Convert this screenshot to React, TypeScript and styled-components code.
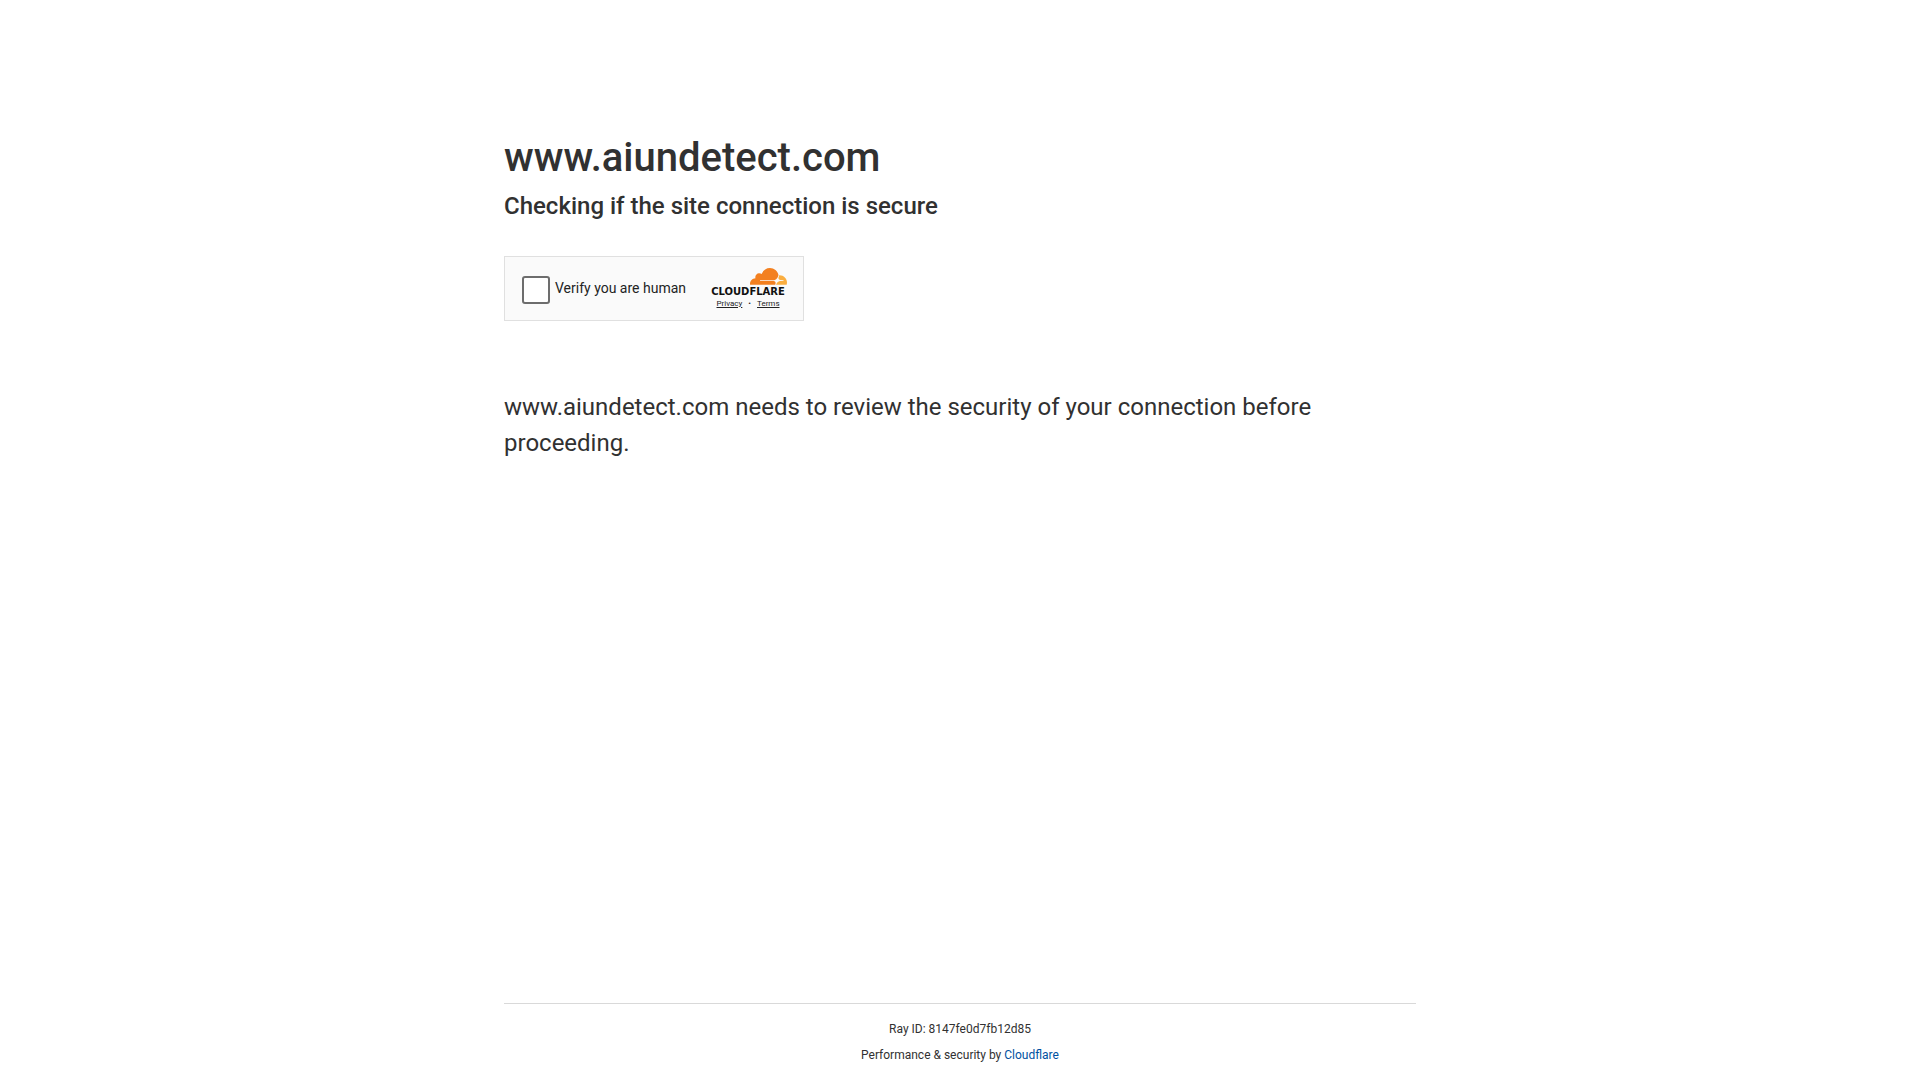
import React from 'react';
import styled, { createGlobalStyle } from 'styled-components';

const GlobalStyle = createGlobalStyle`
  *, *::before, *::after { box-sizing: border-box; }
  body {
    margin: 0;
    background: #fff;
    color: #313131;
    font-family: Roboto, "Liberation Sans", sans-serif;
  }
  h1, h2, p { margin: 0; }
`;

const Page = styled.div`
  display: flex;
  flex-direction: column;
  min-height: 100vh;
`;

const Content = styled.main`
  flex: 1;
  width: 100%;
  max-width: 960px;
  margin: 0 auto;
  padding: 128px 24px 0;
`;

const Title = styled.h1`
  font-size: 40px;
  line-height: 60px;
  font-weight: 500;
`;

const Subtitle = styled.h2`
  font-size: 24px;
  line-height: 36px;
  font-weight: 500;
`;

const Challenge = styled.form`
  display: flex;
  align-items: center;
  justify-content: space-between;
  width: 300px;
  height: 65px;
  margin: 32px 0 68px;
  padding: 0 16px 0 17px;
  border: 1px solid #e0e0e0;
  background: #fafafa;
  color: #232323;
`;

const CheckLabel = styled.label`
  display: flex;
  align-items: center;
  gap: 5px;
  font-size: 14px;
  line-height: 20px;
  padding-top: 2px;
`;

const LabelText = styled.span`
  padding-bottom: 4px;
`;

const Checkbox = styled.input`
  appearance: none;
  width: 28px;
  height: 28px;
  margin: 0;
  border: 2px solid #6d6d6d;
  border-radius: 3px;
  background: #fff;
  cursor: pointer;

  &:checked {
    background: #6d6d6d;
  }
`;

const Brand = styled.div`
  display: flex;
  flex-direction: column;
  align-items: center;
  min-width: 78px;
`;

const Cloud = styled.svg`
  display: block;
  align-self: flex-end;
  width: 37px;
  height: 18px;
`;

const Wordmark = styled.span`
  color: #111;
  font-family: "DejaVu Sans", sans-serif;
  font-size: 10px;
  line-height: 14px;
  font-weight: 700;
`;

const Links = styled.div`
  display: flex;
  gap: 6px;
  padding-bottom: 1px;
  font-size: 8px;
  line-height: 10px;
`;

const SmallLink = styled.a`
  color: #232323;
  text-decoration: underline;
`;

const Message = styled.p`
  font-size: 24px;
  line-height: 36px;
`;

const FooterWrap = styled.footer`
  width: 100%;
  max-width: 960px;
  margin: 0 auto;
  padding: 0 24px;
  font-size: 12px;
  line-height: 18px;
  text-align: center;
`;

const FooterInner = styled.div`
  display: flex;
  flex-direction: column;
  gap: 8px;
  padding: 16px 0;
  border-top: 1px solid #d9d9d9;
`;

const FooterLink = styled.a`
  color: #0051a1;
  text-decoration: none;
`;

function CloudflareCloud() {
  return (
    <Cloud viewBox="0 6 24 11.45" aria-hidden="true">
      <path
        fill="#f38020"
        d="M16.5088 16.8447c.1475-.5068.0908-.9707-.1553-1.3154-.2246-.3164-.6045-.499-1.0615-.5205l-8.6592-.1123a.1559.1559 0 0 1-.1333-.0713c-.0283-.042-.0351-.0986-.021-.1553.0278-.084.1123-.1484.2036-.1562l8.7359-.1123c1.0351-.0489 2.1601-.8868 2.5537-1.9136l.499-1.3013c.0215-.0561.0293-.1128.0147-.168-.5625-2.5463-2.835-4.4453-5.5499-4.4453-2.5039 0-4.6284 1.6177-5.3876 3.8614-.4927-.3658-1.1187-.5625-1.794-.499-1.2026.119-2.1665 1.083-2.2861 2.2856-.0283.31-.0069.6128.0635.894C1.5683 13.171 0 14.7754 0 16.752c0 .1748.0142.3515.0352.5273.0141.083.0844.1475.1689.1475h15.9814c.0909 0 .1758-.0645.2032-.1553l.12-.4268z"
      />
      <path
        fill="#faae40"
        d="M19.2656 11.2813c-.0771 0-.1611 0-.2383.0112-.0566 0-.1054.0415-.127.0976l-.3378 1.1744c-.1475.5068-.0918.9707.1543 1.3164.2256.3164.6055.498 1.0625.5195l1.8437.1133c.0557 0 .1055.0263.1329.0703.0283.043.0351.1074.0214.1562-.0283.084-.1132.1485-.204.1553l-1.921.1123c-1.041.0488-2.1582.8867-2.5527 1.914l-.1406.3585c-.0283.0713.0215.1416.0986.1416h6.5977c.0771 0 .1474-.0489.169-.126.1122-.4082.1757-.837.1757-1.2803 0-2.6025-2.125-4.727-4.7344-4.727z"
      />
    </Cloud>
  );
}

export default function App() {
  return (
    <>
      <GlobalStyle />
      <Page>
        <Content>
          <Title>www.aiundetect.com</Title>
          <Subtitle>Checking if the site connection is secure</Subtitle>
          <Challenge>
            <CheckLabel htmlFor="verify-human">
              <Checkbox id="verify-human" type="checkbox" />
              <LabelText>Verify you are human</LabelText>
            </CheckLabel>
            <Brand>
              <CloudflareCloud />
              <Wordmark>CLOUDFLARE</Wordmark>
              <Links>
                <SmallLink href="#privacy">Privacy</SmallLink>
                <span>•</span>
                <SmallLink href="#terms">Terms</SmallLink>
              </Links>
            </Brand>
          </Challenge>
          <Message>
            www.aiundetect.com needs to review the security of your connection before proceeding.
          </Message>
        </Content>
        <FooterWrap>
          <FooterInner>
            <div>Ray ID: 8147fe0d7fb12d85</div>
            <div>
              Performance &amp; security by <FooterLink href="#cloudflare">Cloudflare</FooterLink>
            </div>
          </FooterInner>
        </FooterWrap>
      </Page>
    </>
  );
}
